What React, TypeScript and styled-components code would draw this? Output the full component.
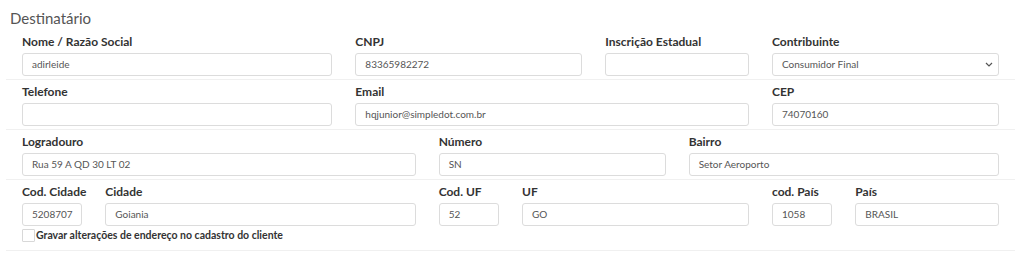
import React from "react";
import styled, { createGlobalStyle } from "styled-components";

const GlobalStyle = createGlobalStyle`
  html, body {
    margin: 0;
    padding: 0;
    background: #fff;
    font-family: Lato, "Liberation Sans", sans-serif;
  }
`;

const Panel = styled.div`
  width: 1024px;
  padding: 0 9px 0 6px;
  box-sizing: border-box;
`;

const Title = styled.h3`
  margin: 0 0 2px;
  padding: 8px 0 0 4px;
  font-size: 15px;
  line-height: 20px;
  font-weight: 400;
  color: #555;
`;

const Row = styled.div`
  display: grid;
  grid-template-columns: repeat(12, 1fr);
  column-gap: 23px;
  padding: 4px 16px 3px 16px;
  border-bottom: 1px solid #f0f0f0;
`;

const Field = styled.div<{ $span: number }>`
  grid-column: span ${(p) => p.$span};
  display: flex;
  flex-direction: column;
  min-width: 0;
`;

const Label = styled.label`
  font-size: 12px;
  line-height: 16px;
  font-weight: 700;
  color: #333;
  margin-bottom: 3px;
  white-space: nowrap;
`;

const Input = styled.div<{ $select?: boolean }>`
  height: 23px;
  box-sizing: border-box;
  border: 1px solid #dcdcdc;
  border-radius: 3px;
  padding: 0 ${(p) => (p.$select ? 5 : 9)}px 0 9px;
  font-size: 10px;
  line-height: 21px;
  color: #555;
  display: flex;
  align-items: center;
  justify-content: space-between;
  white-space: nowrap;
  overflow: hidden;
`;

const Chevron = styled.svg`
  width: 8px;
  height: 5px;
  flex: none;
`;

const CheckRow = styled.div`
  grid-column: span 12;
  display: flex;
  align-items: center;
  gap: 1px;
  margin-top: 2px;
  padding-bottom: 5px;
`;

const Box = styled.span`
  width: 13px;
  height: 13px;
  box-sizing: border-box;
  border: 1px solid #d8d8d8;
  border-radius: 1px;
  background: #fff;
`;

const CheckText = styled.span`
  font-size: 10.5px;
  line-height: 14px;
  font-weight: 700;
  color: #333;
`;

type F = { label: string; value?: string; span: number; select?: boolean };

const rows: F[][] = [
  [
    { label: "Nome / Razão Social", value: "adirleide", span: 4 },
    { label: "CNPJ", value: "83365982272", span: 3 },
    { label: "Inscrição Estadual", value: "", span: 2 },
    { label: "Contribuinte", value: "Consumidor Final", span: 3, select: true },
  ],
  [
    { label: "Telefone", value: "", span: 4 },
    { label: "Email", value: "hqjunior@simpledot.com.br", span: 5 },
    { label: "CEP", value: "74070160", span: 3 },
  ],
  [
    { label: "Logradouro", value: "Rua 59 A QD 30 LT 02", span: 5 },
    { label: "Número", value: "SN", span: 3 },
    { label: "Bairro", value: "Setor Aeroporto", span: 4 },
  ],
  [
    { label: "Cod. Cidade", value: "5208707", span: 1 },
    { label: "Cidade", value: "Goiania", span: 4 },
    { label: "Cod. UF", value: "52", span: 1 },
    { label: "UF", value: "GO", span: 3 },
    { label: "cod. País", value: "1058", span: 1 },
    { label: "País", value: "BRASIL", span: 2 },
  ],
];

const FieldView = ({ f }: { f: F }) => (
  <Field $span={f.span}>
    <Label>{f.label}</Label>
    <Input $select={f.select}>
      <span>{f.value}</span>
      {f.select && (
        <Chevron viewBox="0 0 8 5">
          <path d="M1 1l3 3 3-3" fill="none" stroke="#555" strokeWidth="1.2" />
        </Chevron>
      )}
    </Input>
  </Field>
);

export default function App() {
  return (
    <>
      <GlobalStyle />
      <Panel>
        <Title>Destinatário</Title>
        {rows.map((r, i) => (
          <Row key={i}>
            {r.map((f) => (
              <FieldView key={f.label} f={f} />
            ))}
            {i === rows.length - 1 && (
              <CheckRow>
                <Box />
                <CheckText>Gravar alterações de endereço no cadastro do cliente</CheckText>
              </CheckRow>
            )}
          </Row>
        ))}
      </Panel>
    </>
  );
}
